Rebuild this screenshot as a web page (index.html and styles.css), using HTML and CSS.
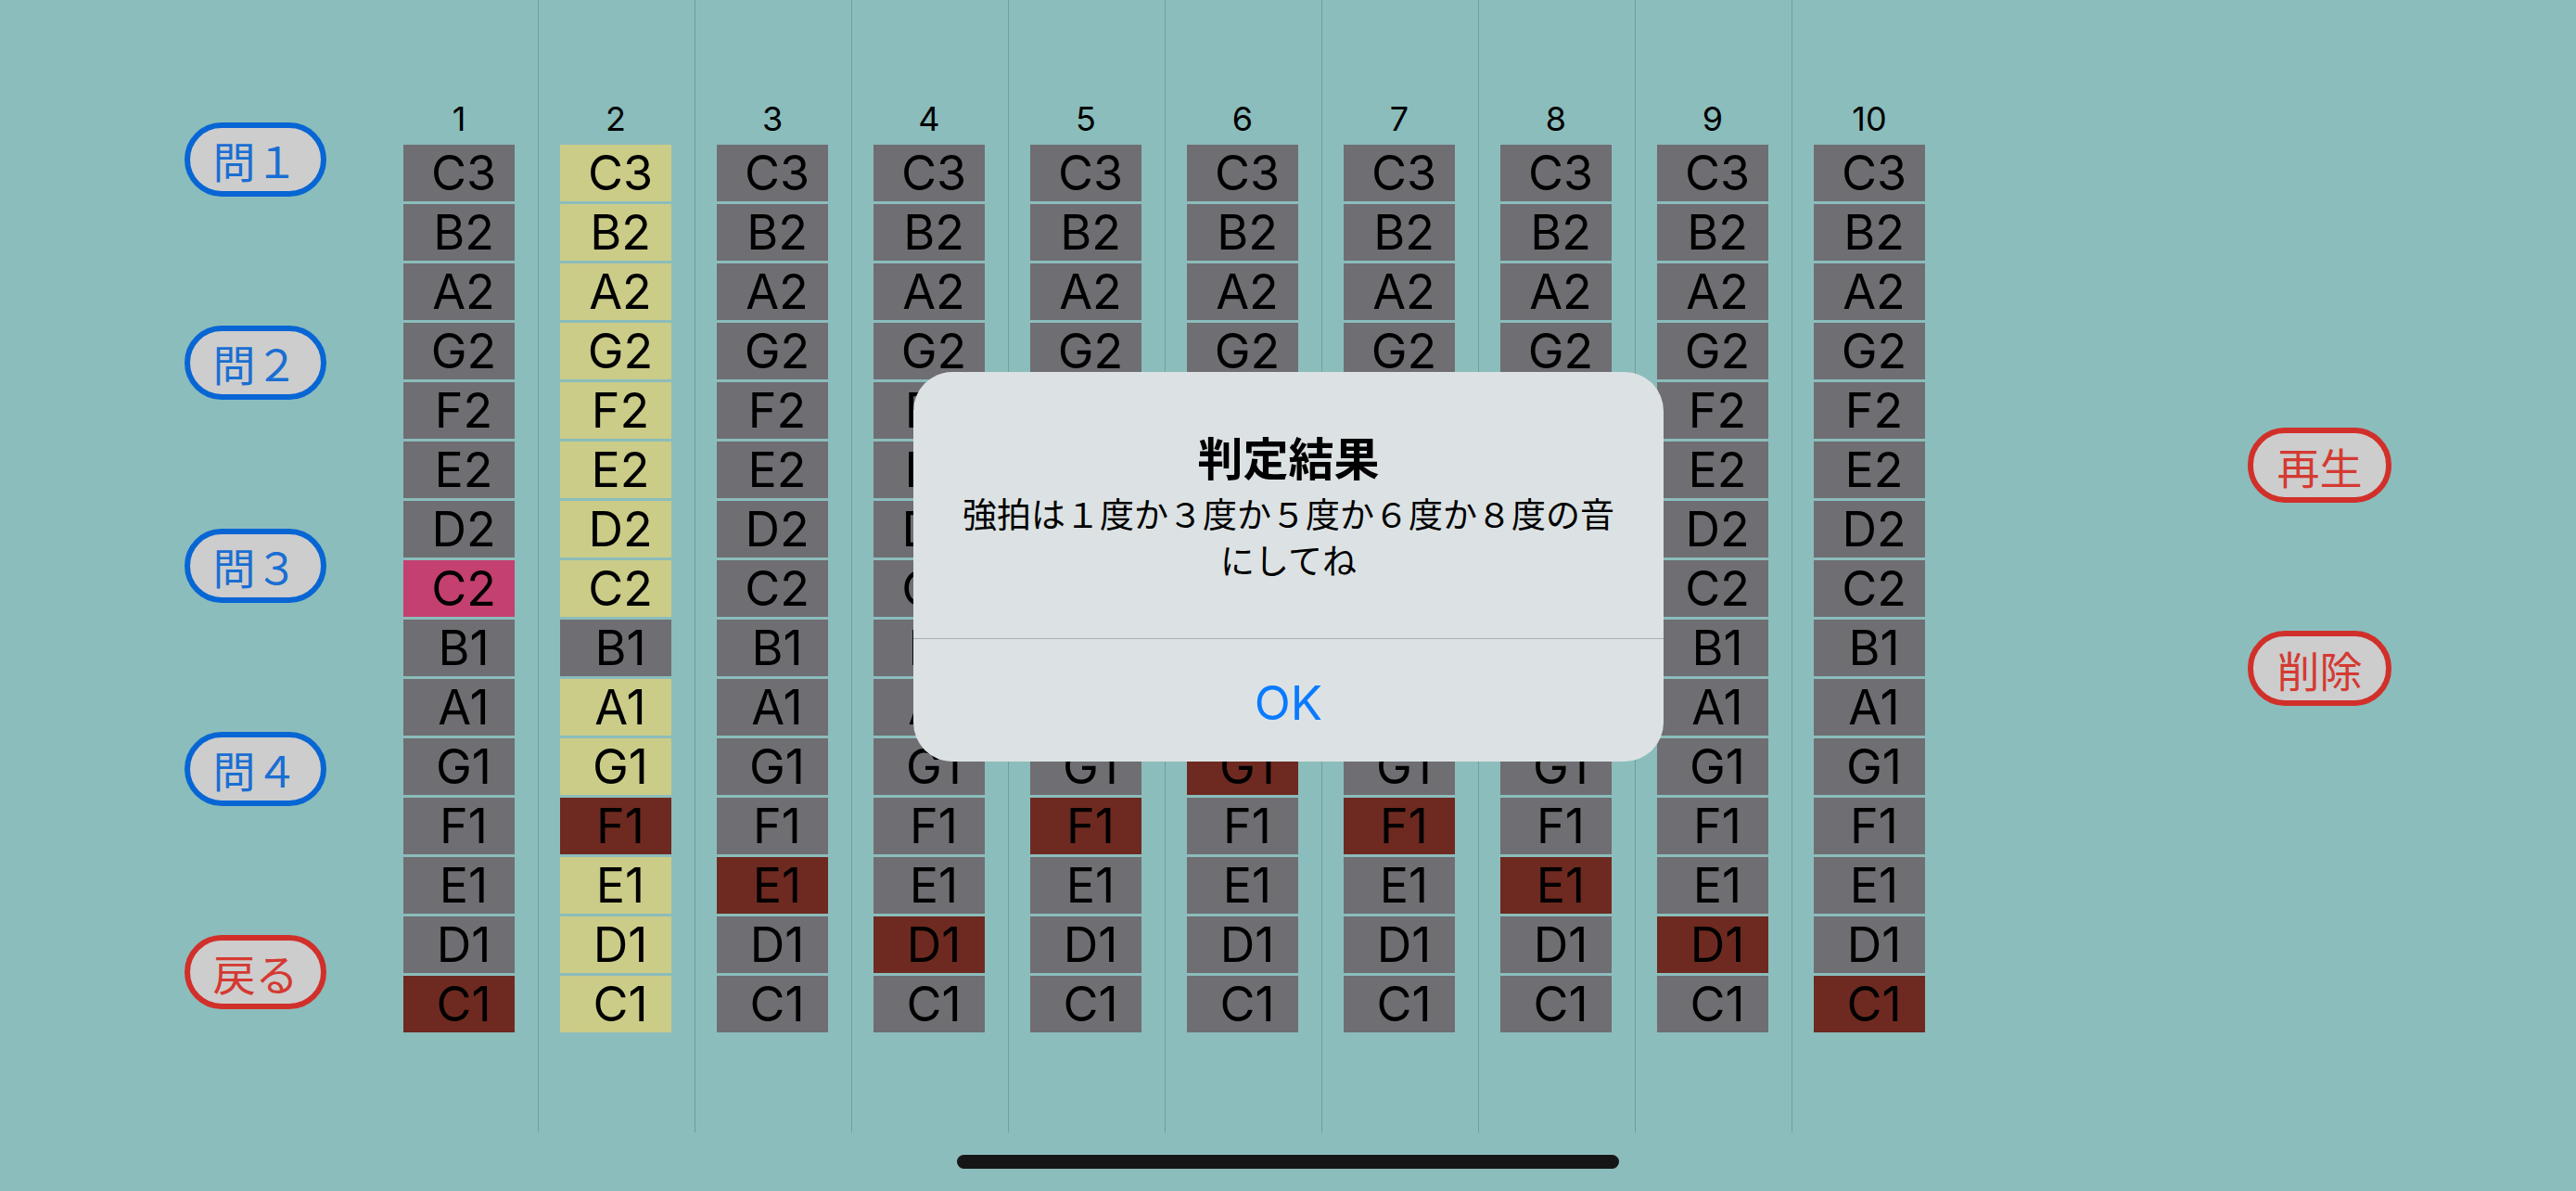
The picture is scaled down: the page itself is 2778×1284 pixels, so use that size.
FILE: index.html
```html
<!DOCTYPE html>
<html lang="ja">
<head>
<meta charset="utf-8">
<title>判定結果</title>
<link rel="stylesheet" href="styles.css">
</head>
<body>
<div class="screen">
  <div class="side-left">
    <div class="btn blue">問１</div>
    <div class="btn blue">問２</div>
    <div class="btn blue">問３</div>
    <div class="btn blue">問４</div>
    <div class="btn red">戻る</div>
  </div>
  <div class="grid">
    <div class="col">
      <div class="num">1</div>
      <div class="cell">C3</div><div class="cell">B2</div><div class="cell">A2</div><div class="cell">G2</div><div class="cell">F2</div><div class="cell">E2</div><div class="cell">D2</div><div class="cell p">C2</div><div class="cell">B1</div><div class="cell">A1</div><div class="cell">G1</div><div class="cell">F1</div><div class="cell">E1</div><div class="cell">D1</div><div class="cell r">C1</div>
    </div>
    <div class="col">
      <div class="num">2</div>
      <div class="cell y">C3</div><div class="cell y">B2</div><div class="cell y">A2</div><div class="cell y">G2</div><div class="cell y">F2</div><div class="cell y">E2</div><div class="cell y">D2</div><div class="cell y">C2</div><div class="cell">B1</div><div class="cell y">A1</div><div class="cell y">G1</div><div class="cell r">F1</div><div class="cell y">E1</div><div class="cell y">D1</div><div class="cell y">C1</div>
    </div>
    <div class="col">
      <div class="num">3</div>
      <div class="cell">C3</div><div class="cell">B2</div><div class="cell">A2</div><div class="cell">G2</div><div class="cell">F2</div><div class="cell">E2</div><div class="cell">D2</div><div class="cell">C2</div><div class="cell">B1</div><div class="cell">A1</div><div class="cell">G1</div><div class="cell">F1</div><div class="cell r">E1</div><div class="cell">D1</div><div class="cell">C1</div>
    </div>
    <div class="col">
      <div class="num">4</div>
      <div class="cell">C3</div><div class="cell">B2</div><div class="cell">A2</div><div class="cell">G2</div><div class="cell">F2</div><div class="cell">E2</div><div class="cell">D2</div><div class="cell">C2</div><div class="cell">B1</div><div class="cell">A1</div><div class="cell">G1</div><div class="cell">F1</div><div class="cell">E1</div><div class="cell r">D1</div><div class="cell">C1</div>
    </div>
    <div class="col">
      <div class="num">5</div>
      <div class="cell">C3</div><div class="cell">B2</div><div class="cell">A2</div><div class="cell">G2</div><div class="cell">F2</div><div class="cell">E2</div><div class="cell">D2</div><div class="cell">C2</div><div class="cell">B1</div><div class="cell">A1</div><div class="cell">G1</div><div class="cell r">F1</div><div class="cell">E1</div><div class="cell">D1</div><div class="cell">C1</div>
    </div>
    <div class="col">
      <div class="num">6</div>
      <div class="cell">C3</div><div class="cell">B2</div><div class="cell">A2</div><div class="cell">G2</div><div class="cell">F2</div><div class="cell">E2</div><div class="cell">D2</div><div class="cell">C2</div><div class="cell">B1</div><div class="cell">A1</div><div class="cell r">G1</div><div class="cell">F1</div><div class="cell">E1</div><div class="cell">D1</div><div class="cell">C1</div>
    </div>
    <div class="col">
      <div class="num">7</div>
      <div class="cell">C3</div><div class="cell">B2</div><div class="cell">A2</div><div class="cell">G2</div><div class="cell">F2</div><div class="cell">E2</div><div class="cell">D2</div><div class="cell">C2</div><div class="cell">B1</div><div class="cell">A1</div><div class="cell">G1</div><div class="cell r">F1</div><div class="cell">E1</div><div class="cell">D1</div><div class="cell">C1</div>
    </div>
    <div class="col">
      <div class="num">8</div>
      <div class="cell">C3</div><div class="cell">B2</div><div class="cell">A2</div><div class="cell">G2</div><div class="cell">F2</div><div class="cell">E2</div><div class="cell">D2</div><div class="cell">C2</div><div class="cell">B1</div><div class="cell">A1</div><div class="cell">G1</div><div class="cell">F1</div><div class="cell r">E1</div><div class="cell">D1</div><div class="cell">C1</div>
    </div>
    <div class="col">
      <div class="num">9</div>
      <div class="cell">C3</div><div class="cell">B2</div><div class="cell">A2</div><div class="cell">G2</div><div class="cell">F2</div><div class="cell">E2</div><div class="cell">D2</div><div class="cell">C2</div><div class="cell">B1</div><div class="cell">A1</div><div class="cell">G1</div><div class="cell">F1</div><div class="cell">E1</div><div class="cell r">D1</div><div class="cell">C1</div>
    </div>
    <div class="col">
      <div class="num">10</div>
      <div class="cell">C3</div><div class="cell">B2</div><div class="cell">A2</div><div class="cell">G2</div><div class="cell">F2</div><div class="cell">E2</div><div class="cell">D2</div><div class="cell">C2</div><div class="cell">B1</div><div class="cell">A1</div><div class="cell">G1</div><div class="cell">F1</div><div class="cell">E1</div><div class="cell">D1</div><div class="cell r">C1</div>
    </div>
  </div>
  <div class="side-right">
    <div class="btn red wide">再生</div>
    <div class="btn red wide">削除</div>
  </div>
</div>

<div class="alert">
  <div class="alert-body">
    <div class="alert-title">判定結果</div>
    <div class="alert-msg">強拍は１度か３度か５度か６度か８度の音<br>にしてね</div>
  </div>
  <div class="alert-sep"></div>
  <div class="alert-btn">OK</div>
</div>

<div class="home"></div>
</body>
</html>
```
FILE: styles.css
```css
html, body {
  margin: 0;
  padding: 0;
}

body {
  width: 2778px;
  height: 1284px;
  overflow: hidden;
  position: relative;
  background: #8bbdbc;
  font-family: Inter, "Noto Sans CJK JP", sans-serif;
  color: #000;
}

.screen {
  display: flex;
  align-items: flex-start;
  height: 1284px;
}

.side-left {
  width: 412px;
  box-sizing: border-box;
  padding: 132px 0 0 199px;
  display: flex;
  flex-direction: column;
  gap: 139px;
}

.btn {
  width: 153px;
  height: 80px;
  box-sizing: border-box;
  border: 6px solid;
  border-radius: 40px;
  background: #cdcdcd;
  display: flex;
  align-items: center;
  justify-content: center;
  font-size: 46px;
  font-family: "Noto Sans CJK JP", sans-serif;
}

.btn.wide {
  width: 155px;
  height: 81px;
}

.blue {
  border-color: #0866d4;
  color: #1a6ed2;
}

.red {
  border-color: #d1302a;
  color: #d43a32;
}

.grid {
  display: flex;
  height: 1221px;
}

.col {
  width: 168px;
  padding-top: 106px;
}

.col + .col {
  border-left: 1px solid #6f9fa0;
}

.num {
  width: 120px;
  margin-left: 23px;
  height: 44px;
  line-height: 44px;
  margin-bottom: 6px;
  text-align: center;
  font-size: 36px;
}

.cell {
  width: 120px;
  height: 61px;
  margin-left: 23px;
  margin-bottom: 3px;
  box-sizing: border-box;
  padding-left: 10px;
  background: #6f6e73;
  font-size: 52px;
  line-height: 61px;
  text-align: center;
}

.cell.y {
  background: #cbcc88;
}

.cell.r {
  background: #6e2a20;
}

.cell.p {
  background: #c44070;
}

.side-right {
  margin-left: 323px;
  padding-top: 461px;
  display: flex;
  flex-direction: column;
  gap: 138px;
}

.alert {
  position: absolute;
  left: 985px;
  top: 401px;
  width: 809px;
  height: 420px;
  background: #dce2e3;
  border-radius: 42px;
  overflow: hidden;
  display: flex;
  flex-direction: column;
}

.alert-body {
  height: 287px;
  box-sizing: border-box;
  padding: 61px 40px 0;
  text-align: center;
  font-family: "Noto Sans CJK JP", sans-serif;
}

.alert-title {
  font-weight: 700;
  font-size: 49px;
  line-height: 60px;
}

.alert-msg {
  margin-top: 6px;
  font-size: 37px;
  line-height: 50px;
}

.alert-sep {
  height: 1px;
  background: #a9b1b3;
}

.alert-btn {
  flex: 1;
  display: flex;
  align-items: center;
  justify-content: center;
  padding-top: 4px;
  color: #0a7aff;
  font-size: 51px;
  font-family: Inter, sans-serif;
}

.home {
  position: absolute;
  left: 1032px;
  top: 1245px;
  width: 714px;
  height: 15px;
  border-radius: 8px;
  background: #161616;
}
```
